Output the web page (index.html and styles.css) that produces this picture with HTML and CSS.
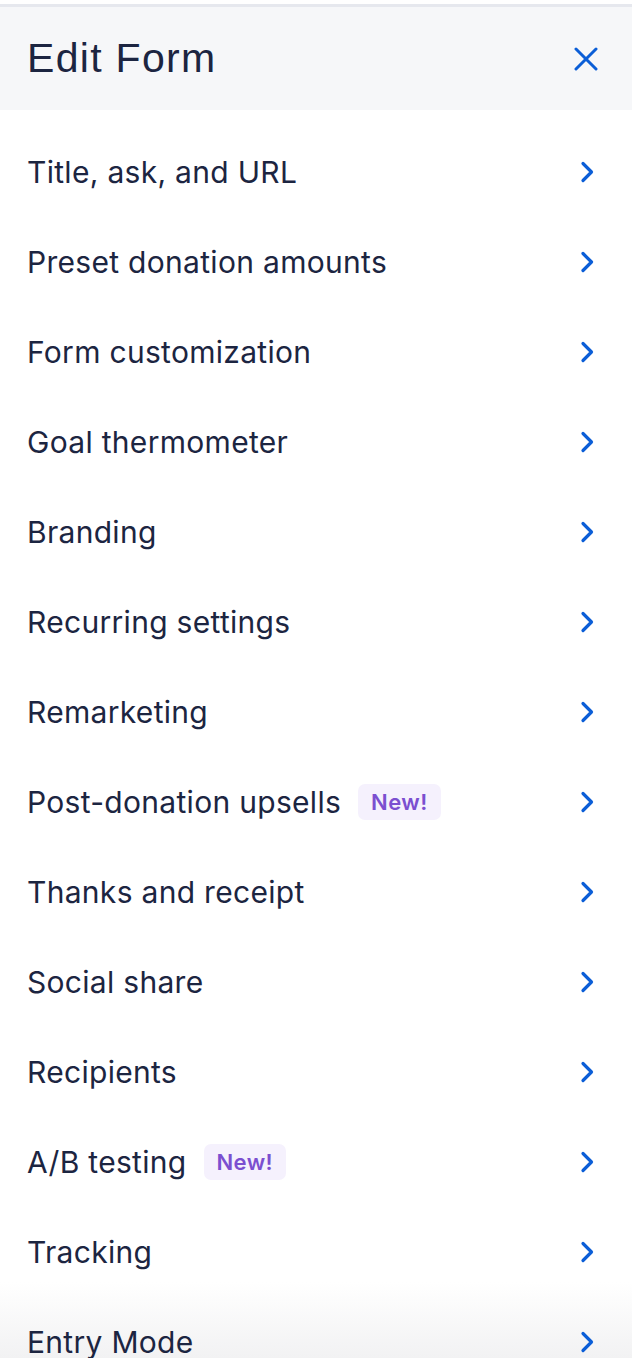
FILE: index.html
```html
<!DOCTYPE html>
<html lang="en">
<head>
<meta charset="utf-8">
<title>Edit Form</title>
<link rel="stylesheet" href="styles.css">
</head>
<body>
<div class="panel">
  <div class="fade"></div>
  <header class="header">
    <h1 class="title">Edit Form</h1>
    <button class="close" aria-label="Close">
      <svg width="24" height="24" viewBox="0 0 24 24"><path d="M2 2 L22 22 M22 2 L2 22" stroke="#0b5ed7" stroke-width="3" stroke-linecap="round" fill="none"/></svg>
    </button>
  </header>
  <ul class="menu">
    <li class="item"><span class="label">Title, ask, and URL</span><svg class="chev" width="16" height="22" viewBox="0 0 16 22"><path d="M4 2.5 L12.5 11 L4 19.5" stroke="#0b5ed7" stroke-width="3.2" stroke-linecap="round" stroke-linejoin="round" fill="none"/></svg></li>
    <li class="item"><span class="label">Preset donation amounts</span><svg class="chev" width="16" height="22" viewBox="0 0 16 22"><path d="M4 2.5 L12.5 11 L4 19.5" stroke="#0b5ed7" stroke-width="3.2" stroke-linecap="round" stroke-linejoin="round" fill="none"/></svg></li>
    <li class="item"><span class="label">Form customization</span><svg class="chev" width="16" height="22" viewBox="0 0 16 22"><path d="M4 2.5 L12.5 11 L4 19.5" stroke="#0b5ed7" stroke-width="3.2" stroke-linecap="round" stroke-linejoin="round" fill="none"/></svg></li>
    <li class="item"><span class="label">Goal thermometer</span><svg class="chev" width="16" height="22" viewBox="0 0 16 22"><path d="M4 2.5 L12.5 11 L4 19.5" stroke="#0b5ed7" stroke-width="3.2" stroke-linecap="round" stroke-linejoin="round" fill="none"/></svg></li>
    <li class="item"><span class="label">Branding</span><svg class="chev" width="16" height="22" viewBox="0 0 16 22"><path d="M4 2.5 L12.5 11 L4 19.5" stroke="#0b5ed7" stroke-width="3.2" stroke-linecap="round" stroke-linejoin="round" fill="none"/></svg></li>
    <li class="item"><span class="label">Recurring settings</span><svg class="chev" width="16" height="22" viewBox="0 0 16 22"><path d="M4 2.5 L12.5 11 L4 19.5" stroke="#0b5ed7" stroke-width="3.2" stroke-linecap="round" stroke-linejoin="round" fill="none"/></svg></li>
    <li class="item"><span class="label">Remarketing</span><svg class="chev" width="16" height="22" viewBox="0 0 16 22"><path d="M4 2.5 L12.5 11 L4 19.5" stroke="#0b5ed7" stroke-width="3.2" stroke-linecap="round" stroke-linejoin="round" fill="none"/></svg></li>
    <li class="item"><span class="label">Post-donation upsells <span class="badge">New!</span></span><svg class="chev" width="16" height="22" viewBox="0 0 16 22"><path d="M4 2.5 L12.5 11 L4 19.5" stroke="#0b5ed7" stroke-width="3.2" stroke-linecap="round" stroke-linejoin="round" fill="none"/></svg></li>
    <li class="item"><span class="label">Thanks and receipt</span><svg class="chev" width="16" height="22" viewBox="0 0 16 22"><path d="M4 2.5 L12.5 11 L4 19.5" stroke="#0b5ed7" stroke-width="3.2" stroke-linecap="round" stroke-linejoin="round" fill="none"/></svg></li>
    <li class="item"><span class="label">Social share</span><svg class="chev" width="16" height="22" viewBox="0 0 16 22"><path d="M4 2.5 L12.5 11 L4 19.5" stroke="#0b5ed7" stroke-width="3.2" stroke-linecap="round" stroke-linejoin="round" fill="none"/></svg></li>
    <li class="item"><span class="label">Recipients</span><svg class="chev" width="16" height="22" viewBox="0 0 16 22"><path d="M4 2.5 L12.5 11 L4 19.5" stroke="#0b5ed7" stroke-width="3.2" stroke-linecap="round" stroke-linejoin="round" fill="none"/></svg></li>
    <li class="item"><span class="label">A/B testing <span class="badge">New!</span></span><svg class="chev" width="16" height="22" viewBox="0 0 16 22"><path d="M4 2.5 L12.5 11 L4 19.5" stroke="#0b5ed7" stroke-width="3.2" stroke-linecap="round" stroke-linejoin="round" fill="none"/></svg></li>
    <li class="item"><span class="label">Tracking</span><svg class="chev" width="16" height="22" viewBox="0 0 16 22"><path d="M4 2.5 L12.5 11 L4 19.5" stroke="#0b5ed7" stroke-width="3.2" stroke-linecap="round" stroke-linejoin="round" fill="none"/></svg></li>
    <li class="item"><span class="label">Entry Mode</span><svg class="chev" width="16" height="22" viewBox="0 0 16 22"><path d="M4 2.5 L12.5 11 L4 19.5" stroke="#0b5ed7" stroke-width="3.2" stroke-linecap="round" stroke-linejoin="round" fill="none"/></svg></li>
  </ul>
</div>
</body>
</html>
```
FILE: styles.css
```css
html, body {
  margin: 0;
  padding: 0;
  background: #ffffff;
}
body {
  font-family: Inter, "Liberation Sans", sans-serif;
  color: #1c2541;
  height: 1358px;
  overflow: hidden;
}
.panel {
  position: relative;
  padding-top: 4px;
  height: 1354px;
  overflow: hidden;
}
.header {
  position: relative;
  z-index: 1;
  display: flex;
  align-items: center;
  justify-content: space-between;
  height: 103px;
  border-top: 3px solid #e6e8ee;
  background: #f6f7f9;
  padding: 0 34px 0 27px;
}
.title {
  margin: 0;
  font-family: "Liberation Sans", Arial, sans-serif;
  font-weight: 400;
  font-size: 41px;
  color: #1c2541;
  letter-spacing: 1.3px;
}
.close {
  border: 0;
  background: none;
  padding: 0;
  width: 24px;
  height: 24px;
  display: flex;
}
.menu {
  position: relative;
  z-index: 1;
  list-style: none;
  margin: 0;
  padding: 17px 0 0;
}
.item {
  display: flex;
  align-items: center;
  justify-content: space-between;
  height: 90px;
  padding: 0 37px 0 27px;
}
.label {
  display: flex;
  align-items: center;
  gap: 17px;
  font-size: 30px;
  letter-spacing: 0.3px;
  color: #1c2541;
}
.badge {
  display: inline-flex;
  align-items: center;
  height: 36px;
  padding: 0 13px;
  border-radius: 7px;
  background: #f5f1fd;
  color: #7b4fd0;
  font-weight: 600;
  font-size: 22px;
  letter-spacing: 0.4px;
}
.chev {
  display: block;
}
.fade {
  position: absolute;
  z-index: 0;
  left: 0;
  right: 0;
  bottom: 0;
  height: 76px;
  background: linear-gradient(to bottom, rgba(243,243,244,0), rgba(242,242,243,1));
}
```
